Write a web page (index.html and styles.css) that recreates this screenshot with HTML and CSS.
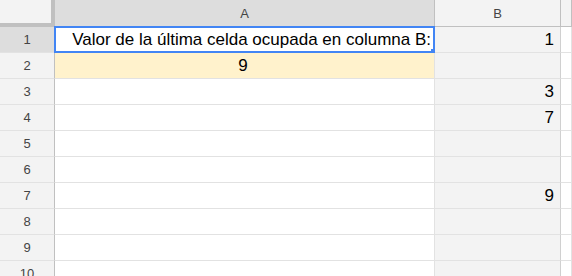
FILE: index.html
```html
<!DOCTYPE html>
<html lang="es">
<head>
    <meta charset="UTF-8">
    <meta name="viewport" content="width=device-width, initial-scale=1.0">
    <title>Hoja de cálculo</title>
    <link rel="stylesheet" href="styles.css">
</head>
<body>
    <div class="sheet">
        <!-- cabecera de columnas -->
        <div class="corner"></div>
        <div class="col-head selected">A</div>
        <div class="col-head">B</div>
        <div class="col-head"></div>

        <div class="row-head selected">1</div>
        <div class="cell cell-a active">Valor de la última celda ocupada en columna B:<span class="handle"></span></div>
        <div class="cell cell-b">1</div>
        <div class="cell"></div>

        <div class="row-head">2</div>
        <div class="cell cell-a result">9</div>
        <div class="cell cell-b"></div>
        <div class="cell"></div>

        <div class="row-head">3</div>
        <div class="cell cell-a"></div>
        <div class="cell cell-b">3</div>
        <div class="cell"></div>

        <div class="row-head">4</div>
        <div class="cell cell-a"></div>
        <div class="cell cell-b">7</div>
        <div class="cell"></div>

        <div class="row-head">5</div>
        <div class="cell cell-a"></div>
        <div class="cell cell-b"></div>
        <div class="cell"></div>

        <div class="row-head">6</div>
        <div class="cell cell-a"></div>
        <div class="cell cell-b"></div>
        <div class="cell"></div>

        <div class="row-head">7</div>
        <div class="cell cell-a"></div>
        <div class="cell cell-b">9</div>
        <div class="cell"></div>

        <div class="row-head">8</div>
        <div class="cell cell-a"></div>
        <div class="cell cell-b"></div>
        <div class="cell"></div>

        <div class="row-head">9</div>
        <div class="cell cell-a"></div>
        <div class="cell cell-b"></div>
        <div class="cell"></div>

        <div class="row-head">10</div>
        <div class="cell cell-a"></div>
        <div class="cell cell-b"></div>
        <div class="cell"></div>
    </div>
</body>
</html>
```

FILE: styles.css
```css
body{
    margin: 0; background: #fff;
    font-family: "Liberation Sans", Arial, sans-serif;
    overflow: hidden;
}
.sheet{ /*cabecera 27px, filas de 26px con su linea*/
    display: grid;
    grid-template-columns: 55px 380px 126px 1fr;
    grid-template-rows: 27px repeat(10, 26px);
}
.corner{
    background: #f3f3f3;
    border-right: 4px solid #c0c0c0; border-bottom: 4px solid #c0c0c0;
}
.col-head{
    display: flex; align-items: center; justify-content: center;
    background: #f3f3f3; color: #444; font-size: 13px;
    border-right: 1px solid #c0c0c0; border-bottom: 1px solid #c0c0c0;
}
.row-head{
    display: flex; align-items: center; justify-content: center;
    background: #f3f3f3; color: #444; font-size: 13px;
    border-right: 1px solid #c0c0c0; border-bottom: 1px solid #e2e2e2;
}
.col-head.selected, .row-head.selected{
    background: #dddddd;
}
.cell{
    position: relative;
    display: flex; align-items: center;
    font-size: 17px; color: #000;
    padding: 0 6px 0 3px;
    border-right: 1px solid #e2e2e2; border-bottom: 1px solid #e2e2e2;
    white-space: nowrap;
}
.cell-a{ justify-content: center; }
.cell-a.active{
    justify-content: flex-end; padding-right: 2px;
    border: 2px solid #4285f4; margin: -1px 0 0 -1px;
}
.cell-b{
    justify-content: flex-end;
    background: #f3f3f3; border-right-color: #d0d0d0;
}
.result{ background: #fff2cc; }
.handle{ /*tirador de relleno*/
    position: absolute; right: -5px; bottom: -5px;
    width: 7px; height: 7px; background: #4285f4;
    border: 1px solid #fff; border-width: 0;
}
```
